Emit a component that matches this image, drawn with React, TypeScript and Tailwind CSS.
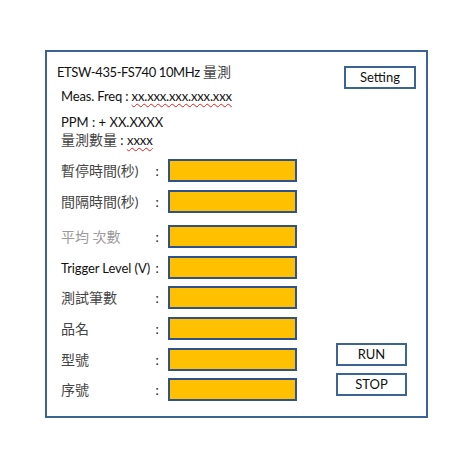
import React from "react";

const font = { fontFamily: "Lato, 'Noto Sans CJK TC', sans-serif" };

function Row({ label, mt, light, latin }: { label: string; mt: string; light?: boolean; latin?: boolean }) {
  return (
    <div className={`flex items-center h-[23px] ${mt}`}>
      <div
        className={`w-[95px] leading-[16px] whitespace-nowrap ${latin ? "text-[13px] tracking-[-0.1px] text-[#111]" : "text-[14px]"} ${light ? "text-[#9a9a9a]" : latin ? "" : "text-[#444]"}`}
      >
        {label}
      </div>
      <div className="w-[12px] text-[13px] leading-[16px] text-[#222]">:</div>
      <div className="w-[130px] h-[23px] bg-[#ffc000] border-2 border-[#2f528f]" />
    </div>
  );
}

export default function App() {
  return (
    <div className="w-[460px] h-[460px] bg-white pt-[50px] pl-[45px]" style={font}>
      <div className="w-[383px] h-[368px] border-2 border-[#3b6494] flex">
        <div className="w-[250px] flex flex-col">
          <div className="mt-[12px] ml-[10px] text-[13px] leading-[16px] text-[#111] whitespace-nowrap">
            <span className="tracking-[-0.4px]">ETSW-435-FS740 10MHz</span> <span className="text-[14px] text-[#444]">量測</span>
          </div>
          <div className="mt-[8px] ml-[14px] text-[13px] leading-[16px] text-[#111] whitespace-nowrap tracking-[-0.15px]">
            Meas. Freq : <span className="underline decoration-wavy decoration-[#e02020] decoration-1 underline-offset-2">xx.xxx.xxx.xxx.xxx</span>
          </div>
          <div className="mt-[10px] ml-[14px] text-[13px] leading-[16px] text-[#111] whitespace-nowrap">PPM : + XX.XXXX</div>
          <div className="mt-[2px] ml-[14px] text-[13px] leading-[16px] text-[#111] whitespace-nowrap">
            <span className="text-[14px] text-[#444]">量測數量</span> : <span className="underline decoration-wavy decoration-[#e02020] decoration-1 underline-offset-2">xxxx</span>
          </div>
          <div className="ml-[14px] flex flex-col">
            <Row label="暫停時間(秒)" mt="mt-[11px]" />
            <Row label="間隔時間(秒)" mt="mt-[8px]" />
            <Row label="平均 次數" mt="mt-[12px]" light />
            <Row label="Trigger Level (V)" mt="mt-[8px]" latin />
            <Row label="測試筆數" mt="mt-[7px]" />
            <Row label="品名" mt="mt-[8px]" />
            <Row label="型號" mt="mt-[8px]" />
            <Row label="序號" mt="mt-[7px]" />
          </div>
        </div>
        <div className="flex-1 flex flex-col pb-[20px]">
          <div className="mt-[14px] ml-[47px] w-[72px] h-[23px] border-2 border-[#3b6494] flex items-center justify-center text-[13px] text-[#111]">Setting</div>
          <div className="flex-1" />
          <div className="ml-[39px] w-[71px] h-[23px] border-2 border-[#3b6494] flex items-center justify-center text-[13px] text-[#111]">RUN</div>
          <div className="mt-[7px] ml-[39px] w-[71px] h-[23px] border-2 border-[#3b6494] flex items-center justify-center text-[13px] text-[#111]">STOP</div>
        </div>
      </div>
    </div>
  );
}
